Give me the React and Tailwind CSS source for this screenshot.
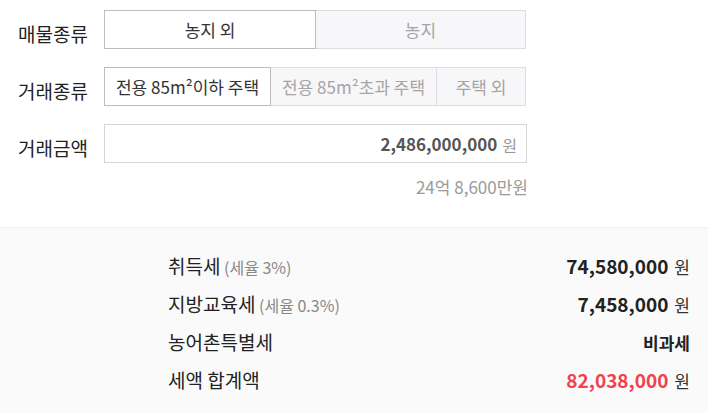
import React from 'react';

const FONT = { fontFamily: '"Noto Sans CJK KR", "Noto Sans", sans-serif' };

const Segment = ({ items, active }) => (
  <div className="flex w-[422px] h-[39px]">
    {items.map((it, i) => {
      const on = i === active;
      return (
        <div
          key={it.label}
          className={`flex items-center justify-center text-[17px] border ${
            on ? 'bg-white border-[#bdbdbd] text-[#333] z-10' : 'bg-[#f7f7f9] border-[#dedee2] text-[#a5a5a5]'
          } ${i > 0 ? '-ml-px' : ''}`}
          style={{ width: it.w }}
        >
          {it.label}
        </div>
      );
    })}
  </div>
);

const Row = ({ label, children }) => (
  <div className="flex items-center">
    <div className="w-[104px] pl-[18px] pt-[9px] text-[19px] text-[#222]">{label}</div>
    {children}
  </div>
);

const TaxRow = ({ label, note, value, unit = true, red }) => (
  <div className="flex items-center justify-between h-[38px]">
    <div className="text-[19px] text-[#222]">
      {label}
      {note && <span className="text-[16px] text-[#888]"> {note}</span>}
    </div>
    <div className="flex items-center gap-[6px]">
      <span className={`${unit ? 'text-[19px]' : 'text-[17px]'} font-bold ${red ? 'text-[#f2414b]' : 'text-[#222]'}`}>
        {value}
      </span>
      {unit && <span className="text-[17px] text-[#333]">원</span>}
    </div>
  </div>
);

export default function App() {
  return (
    <div className="w-[708px] h-[413px] bg-white overflow-hidden" style={FONT}>
      <div className="pt-[10px] flex flex-col gap-[18px]">
        <Row label="매물종류">
          <Segment
            active={0}
            items={[
              { label: '농지 외', w: 212 },
              { label: '농지', w: 211 },
            ]}
          />
        </Row>
        <Row label="거래종류">
          <Segment
            active={0}
            items={[
              { label: '전용 85m²이하 주택', w: 167 },
              { label: '전용 85m²초과 주택', w: 167 },
              { label: '주택 외', w: 90 },
            ]}
          />
        </Row>
        <Row label="거래금액">
          <div className="w-[423px] h-[39px] border border-[#d6d6d6] flex items-center justify-end pr-[9px] gap-[5px]">
            <span className="text-[17px] font-bold text-[#555]">2,486,000,000</span>
            <span className="text-[16px] text-[#999] pt-[3px]">원</span>
          </div>
        </Row>
      </div>
      <div className="w-[528px] text-right text-[17px] text-[#9a9a9a] mt-[11px]">24억 8,600만원</div>
      <div className="mt-[27px] border-t border-[#f0f0f0] bg-[#fafafa] h-[200px] pl-[168px] pr-[18px] pt-[20px]">
        <TaxRow label="취득세" note="(세율 3%)" value="74,580,000" />
        <TaxRow label="지방교육세" note="(세율 0.3%)" value="7,458,000" />
        <TaxRow label="농어촌특별세" value="비과세" unit={false} />
        <TaxRow label="세액 합계액" value="82,038,000" red />
      </div>
    </div>
  );
}
